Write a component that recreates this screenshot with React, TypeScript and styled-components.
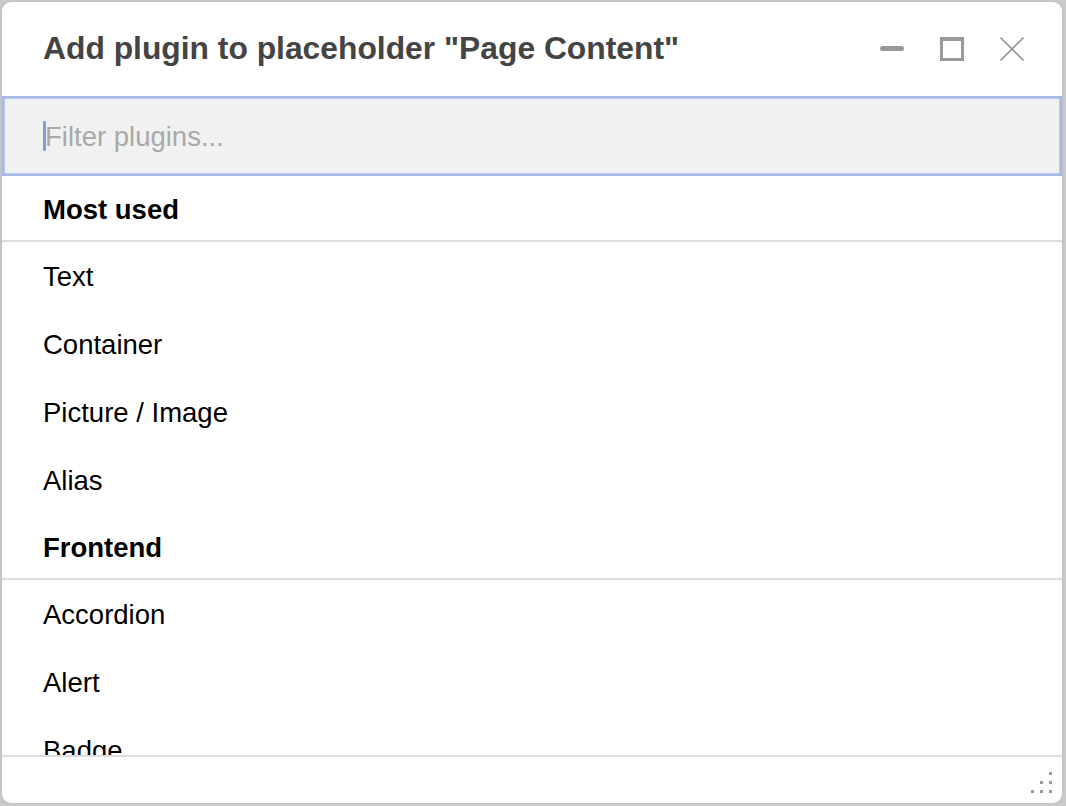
import styled, { createGlobalStyle } from 'styled-components'

const GlobalStyle = createGlobalStyle`
    html, body {
        margin: 0;
        padding: 0;
        background: #cacaca;
    }
    body {
        font-family: "Liberation Sans", Arial, Helvetica, sans-serif;
    }
`

const Page = styled.div`
    padding: 2px 4px 3px 2px;
    height: 806px;
    box-sizing: border-box;
`

const Dialog = styled.div`
    background: #fff;
    border-radius: 9px;
    height: 801px;
    width: 1060px;
    display: flex;
    flex-direction: column;
    overflow: hidden;
    box-shadow: 0 0 3px rgba(0, 0, 0, 0.12);
`

const TitleBar = styled.div`
    align-items: center;
    display: flex;
    height: 94px;
    padding: 0 38px 0 41px;
    flex-shrink: 0;
`

const Title = styled.h1`
    color: #444;
    flex: 1;
    font-size: 31.8px;
    font-weight: bold;
    margin: 0;
    padding-bottom: 2px;
`

const Controls = styled.div`
    align-items: center;
    display: flex;
    gap: 36px;
`

const ControlButton = styled.button`
    background: none;
    border: 0;
    cursor: pointer;
    display: flex;
    height: 24px;
    padding: 0;
    width: 24px;
`

const FilterWrap = styled.div`
    position: relative;
    flex-shrink: 0;
    &::before {
        background: #7e9ee0;
        border-radius: 1px;
        content: '';
        height: 30px;
        left: 41px;
        position: absolute;
        top: 25px;
        width: 3px;
    }
`

const FilterInput = styled.input`
    background: #f1f1f1;
    border: 2px solid #a6b9e6;
    box-shadow: inset 0 0 0 1px #b9c8ee;
    box-sizing: border-box;
    caret-color: transparent;
    color: #333;
    display: block;
    font-family: inherit;
    font-size: 27.5px;
    height: 80px;
    outline: none;
    padding: 2px 0 0 41px;
    width: 100%;
    &::placeholder {
        color: #a9a9a9;
    }
`

const List = styled.div`
    flex: 1;
    overflow: hidden;
`

const SectionHeader = styled.div`
    align-items: center;
    border-bottom: 2px solid #dedede;
    box-sizing: border-box;
    color: #000;
    display: flex;
    font-size: 27.5px;
    font-weight: bold;
    height: 66px;
    padding: 4px 0 0 41px;
`

const Item = styled.div`
    align-items: center;
    box-sizing: border-box;
    color: #000;
    cursor: pointer;
    display: flex;
    font-size: 27.5px;
    height: 68px;
    padding: 2px 0 0 41px;
`

const Footer = styled.div`
    align-items: flex-end;
    border-top: 2px solid #dedede;
    box-sizing: border-box;
    display: flex;
    flex-shrink: 0;
    height: 48px;
    justify-content: flex-end;
    padding: 0 10px 10px 0;
`

const sections = [
    { title: 'Most used', items: ['Text', 'Container', 'Picture / Image', 'Alias'] },
    { title: 'Frontend', items: ['Accordion', 'Alert', 'Badge'] },
]

function Grip() {
    const dots = [
        [18, 2],
        [9, 11],
        [18, 11],
        [0, 20],
        [9, 20],
        [18, 20],
    ]
    return (
        <svg width="21" height="23" viewBox="0 0 21 23">
            {dots.map(([x, y]) => (
                <rect key={`${x}-${y}`} x={x} y={y} width="3" height="3" fill="#9a9a9a" />
            ))}
        </svg>
    )
}

export default function App() {
    return (
        <>
            <GlobalStyle />
            <Page>
                <Dialog>
                    <TitleBar>
                        <Title>Add plugin to placeholder "Page Content"</Title>
                        <Controls>
                            <ControlButton aria-label="Minimize">
                                <svg width="24" height="24" viewBox="0 0 24 24">
                                    <rect x="0" y="9" width="24" height="5" rx="2.5" fill="#999" />
                                </svg>
                            </ControlButton>
                            <ControlButton aria-label="Maximize">
                                <svg width="24" height="24" viewBox="0 0 24 24">
                                    <rect x="1.5" y="1.5" width="21" height="21" fill="none" stroke="#999" strokeWidth="3" />
                                    <rect x="0" y="0" width="24" height="4" fill="#999" />
                                </svg>
                            </ControlButton>
                            <ControlButton aria-label="Close">
                                <svg width="24" height="24" viewBox="0 0 24 24">
                                    <path d="M0.5 0.5 L23.5 23.5 M23.5 0.5 L0.5 23.5" stroke="#999" strokeWidth="1.6" />
                                </svg>
                            </ControlButton>
                        </Controls>
                    </TitleBar>
                    <FilterWrap>
                        <FilterInput placeholder="Filter plugins..." />
                    </FilterWrap>
                    <List>
                        {sections.map((section) => (
                            <div key={section.title}>
                                <SectionHeader>{section.title}</SectionHeader>
                                {section.items.map((item) => (
                                    <Item key={item}>{item}</Item>
                                ))}
                            </div>
                        ))}
                    </List>
                    <Footer>
                        <Grip />
                    </Footer>
                </Dialog>
            </Page>
        </>
    )
}
